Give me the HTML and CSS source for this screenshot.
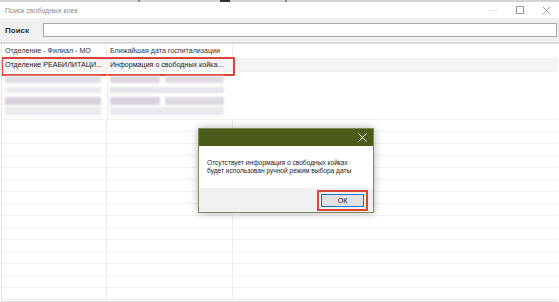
FILE: index.html
```html
<!DOCTYPE html>
<html lang="ru">
<head>
    <meta charset="UTF-8">
    <title>Поиск свободных коек</title>
    <link rel="stylesheet" href="styles.css">
</head>
<body>
    <div class="screen-strip">
        <span class="strip-bit b1"></span>
        <span class="strip-bit b2"></span>
        <span class="strip-bit b3"></span>
    </div>

    <!-- Окно поиска -->
    <div class="window">
        <div class="titlebar">
            <span class="title">Поиск свободных коек</span>
            <div class="win-buttons">
                <span class="wbtn min"></span>
                <span class="wbtn max"></span>
                <span class="wbtn close">
                    <svg width="9" height="9" viewBox="0 0 9 9"><path d="M0.5 0.5 L8.5 8.5 M8.5 0.5 L0.5 8.5" stroke="#9a9a9a" stroke-width="0.9" fill="none"/></svg>
                </span>
            </div>
        </div>

        <div class="search-bar">
            <label class="search-label">Поиск</label>
            <div class="search-input"></div>
        </div>

        <!-- Таблица -->
        <div class="grid">
            <div class="row head">
                <div class="cell">Отделение - Филиал - МО</div>
                <div class="cell">Ближайшая дата госпитализации</div>
                <div class="cell"></div>
            </div>
            <div class="row selected">
                <div class="cell">Отделение РЕАБИЛИТАЦИ...</div>
                <div class="cell">Информация о свободных койка...</div>
                <div class="cell"></div>
            </div>
            <div class="blur-rows">
                <div class="blur b-a"></div>
                <div class="blur b-b"></div>
                <div class="blur b-c"></div>
                <div class="blur b-d"></div>
                <div class="blur b-e"></div>
                <div class="blur b-f"></div>
                <div class="blur b-g"></div>
                <div class="blur b-h"></div>
                <div class="blur b-i"></div>
                <div class="blur b-j"></div>
            </div>
            <div class="rows-empty" id="emptyRows"></div>
        </div>
    </div>

    <!-- Сообщение -->
    <div class="dialog">
        <div class="dialog-title">
            <svg width="9" height="9" viewBox="0 0 9 9"><path d="M0.5 0.5 L8.5 8.5 M8.5 0.5 L0.5 8.5" stroke="#ffffff" stroke-width="1" fill="none"/></svg>
        </div>
        <div class="dialog-body">
            <p>Отсутствует информация о свободных койках<br>будет использован ручной режим выбора даты</p>
        </div>
        <div class="dialog-footer">
            <div class="ok-mark">
                <button class="ok-btn">ОК</button>
            </div>
        </div>
    </div>

    <script>
        // Пустые строки таблицы
        const emptyRows = document.getElementById('emptyRows');
        for (let i = 0; i < 15; i++) {
            const row = document.createElement('div');
            row.className = 'row';
            row.innerHTML = '<div class="cell"></div><div class="cell"></div><div class="cell"></div>';
            emptyRows.appendChild(row);
        }
    </script>
</body>
</html>
```

FILE: styles.css
```css
body {
    margin: 0;
    padding: 0;
    width: 559px;
    height: 302px;
    overflow: hidden;
    background-color: #ffffff;
    font-family: "Liberation Sans", Arial, sans-serif;
    color: #222;
    position: relative;
}
.screen-strip {
    height: 2px;
    background-color: #d4d4d4;
    position: relative;
}
.strip-bit {
    position: absolute;
    top: 0;
    height: 2px;
}
.b1 { left: 138px; width: 2px; background: #888; }
.b2 { left: 220px; width: 10px; background: #333; }
.b3 { left: 285px; width: 2px; background: #888; }

.window {
    display: flex;
    flex-direction: column;
    height: 300px;
}
.titlebar {
    height: 16px;
    display: flex;
    align-items: center;
    justify-content: space-between;
    background: #ffffff;
    padding-left: 5px;
}
.title {
    font-size: 7px;
    color: #8a8a8a;
}
.win-buttons {
    display: flex;
    align-items: center;
    height: 16px;
}
.wbtn {
    width: 26px;
    height: 16px;
    display: flex;
    align-items: center;
    justify-content: center;
}
.wbtn.min::before {
    content: "";
    width: 8px;
    height: 1px;
    background: #e2e2e2;
}
.wbtn.max::before {
    content: "";
    width: 6px;
    height: 6px;
    border: 1px solid #9a9a9a;
}
.search-bar {
    height: 24px;
    background-color: #f0f0f0;
    display: flex;
    align-items: center;
    padding: 0 2px 0 5px;
    border-bottom: 2px solid #dadada;
}
.search-label {
    width: 38px;
    font-size: 8px;
    font-weight: bold;
    color: #333;
}
.search-input {
    flex: 1;
    height: 12px;
    background: #ffffff;
    border: 1px solid #a8a8a8;
}
.grid {
    flex: 1;
    border-left: 1px solid #e4e4e4;
    border-bottom: 1px solid #dcdcdc;
    margin-left: 1px;
    margin-right: 1px;
    overflow: hidden;
}
.row {
    display: grid;
    grid-template-columns: 105px 126px 1fr;
    height: 12px;
    border-bottom: 1px solid #f0f0f0;
    box-sizing: border-box;
}
.row .cell {
    border-right: 1px solid #ececec;
    font-size: 7.1px;
    line-height: 11px;
    padding-left: 3px;
    white-space: nowrap;
    overflow: hidden;
}
.row .cell:last-child {
    border-right: none;
}
.row.head {
    height: 15px;
}
.row.head .cell {
    line-height: 14px;
    color: #333;
}
.row.selected {
    position: relative;
    height: 13px;
    background: #f4f4f4;
}
.row.selected::after {
    content: "";
    position: absolute;
    left: -1px;
    top: -2px;
    width: 230px;
    height: 15px;
    border: 2px solid #d9453c;
    border-radius: 1px;
}
.row.selected .cell {
    line-height: 12px;
    color: #222;
}
.blur-rows {
    height: 47px;
    position: relative;
    border-bottom: 1px solid #f0f0f0;
    background:
        linear-gradient(#ececec, #ececec) 105px 0 / 1px 47px no-repeat;
}
.blur {
    position: absolute;
    background: #dcd6de;
    filter: blur(1.2px);
}
.b-a { left: 3px;   top: 4px;  width: 96px;  height: 7px; background: #e2dee5; }
.b-b { left: 108px; top: 4px;  width: 50px;  height: 7px; background: #dcd6df; }
.b-i { left: 163px; top: 4px;  width: 59px;  height: 7px; background: #e0dae3; }
.b-c { left: 3px;   top: 15px; width: 96px;  height: 6px; background: #ebe8ed; }
.b-d { left: 108px; top: 15px; width: 114px; height: 6px; background: #e7e3ea; }
.b-e { left: 3px;   top: 25px; width: 96px;  height: 8px; background: #d7d1da; }
.b-f { left: 108px; top: 25px; width: 50px;  height: 8px; background: #d9d2dc; }
.b-j { left: 163px; top: 25px; width: 59px;  height: 8px; background: #ded8e1; }
.b-g { left: 3px;   top: 35px; width: 96px;  height: 8px; background: #ebe8ee; }
.b-h { left: 108px; top: 35px; width: 114px; height: 8px; background: #ece8ee; }

/* Диалог */
.dialog {
    position: absolute;
    left: 198px;
    top: 128px;
    width: 174px;
    height: 83px;
    display: flex;
    flex-direction: column;
    background: #ffffff;
    border: 1px solid #7d8a60;
    box-shadow: 0 0 8px rgba(0, 0, 0, 0.3);
}
.dialog-title {
    height: 17px;
    background-color: #4c5b1a;
    display: flex;
    align-items: center;
    justify-content: flex-end;
    padding-right: 6px;
}
.dialog-body {
    flex: 1;
    display: flex;
    align-items: center;
    padding-left: 8px;
}
.dialog-body p {
    margin: 0;
    font-size: 6.6px;
    line-height: 8px;
    color: #222;
}
.dialog-footer {
    height: 24px;
    background: #f0f0f0;
    display: flex;
    align-items: center;
    justify-content: flex-end;
    padding-right: 5px;
}
.ok-mark {
    border: 2px solid #d9453c;
    padding: 2px;
    display: flex;
}
.ok-btn {
    width: 43px;
    height: 13px;
    padding: 0;
    font-family: "Liberation Sans", Arial, sans-serif;
    font-size: 7px;
    color: #222;
    background: #e1e1e1;
    border: 1px solid #0078d7;
    box-shadow: inset 0 0 0 1px #e1e1e1;
}
```
